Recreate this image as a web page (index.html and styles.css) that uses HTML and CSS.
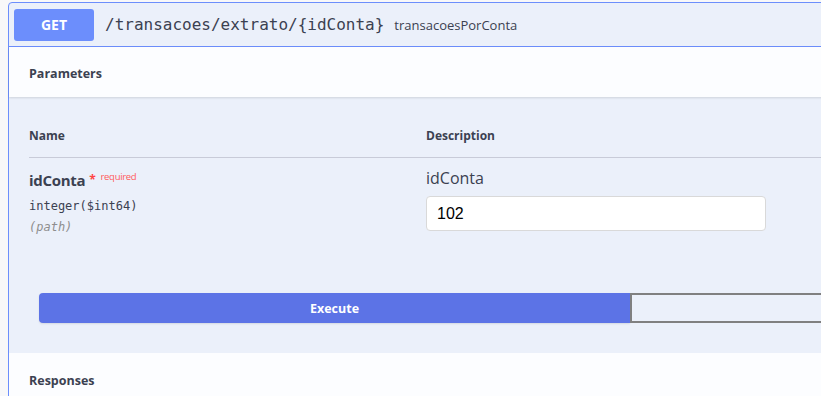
FILE: index.html
```html
<!DOCTYPE html>
<html lang="en">
<head>
  <meta charset="UTF-8">
  <title>transacoesPorConta</title>
  <link rel="stylesheet" href="styles.css">
</head>
<body>

<div class="opblock">
  <div class="opblock-summary">
    <span class="method">GET</span>
    <span class="path">/transacoes/extrato/{idConta}</span>
    <span class="op-id">transacoesPorConta</span>
  </div>

  <div class="section-header">
    <h4>Parameters</h4>
  </div>

  <div class="params">
    <div class="param-head">
      <div class="col-name">Name</div>
      <div class="col-desc">Description</div>
    </div>
    <div class="param-row">
      <div class="col-name">
        <div class="param-name">idConta<span class="star">*</span><span class="required">required</span></div>
        <div class="param-type">integer<span class="fmt">($int64)</span></div>
        <div class="param-in">(path)</div>
      </div>
      <div class="col-desc">
        <div class="desc-text">idConta</div>
        <input class="param-input" type="text" value="102">
      </div>
    </div>
  </div>

  <div class="execute-wrap">
    <button class="btn-execute">Execute</button>
    <button class="btn-clear"></button>
  </div>

  <div class="section-header responses">
    <h4>Responses</h4>
  </div>
</div>

</body>
</html>
```

FILE: styles.css
```css
html, body {
  margin: 0;
  overflow: hidden;
}
body {
  background: #f8f8f9;
  padding: 2px 0 0 8px;
  font-family: "Open Sans", sans-serif;
  color: #3b4151;
}
.opblock {
  width: 1000px;
  background: #ebf0fa;
  border: 1px solid #6c8efc;
  border-radius: 4px;
}
.opblock-summary {
  display: flex;
  align-items: center;
  padding: 5px;
  height: 33px;
  border-bottom: 1px solid #6c8efc;
}
.method {
  min-width: 80px;
  height: 32px;
  line-height: 32px;
  text-align: center;
  background: #6c8efc;
  color: #fff;
  font-size: 14px;
  font-weight: 700;
  border-radius: 3px;
}
.path {
  font-family: "DejaVu Sans Mono", monospace;
  font-size: 16px;
  padding: 0 10px 0 11px;
  color: #3b4151;
}
.op-id {
  font-size: 13px;
}
.section-header {
  background: #fcfdff;
  height: 50px;
  display: flex;
  align-items: center;
  padding: 0 20px;
  box-shadow: 0 1px 2px rgba(0,0,0,0.12);
}
.section-header h4 {
  margin: 0;
  font-size: 12.5px;
  font-weight: 700;
  padding-top: 2px;
}
.params {
  padding: 30px 20px 0 20px;
}
.param-head {
  display: flex;
  font-size: 12px;
  font-weight: 700;
  height: 20px;
  padding-bottom: 10px;
  border-bottom: 1px solid #c8cbd8;
}
.col-name {
  width: 397px;
}
.param-row {
  display: flex;
  padding-top: 12px;
  height: 123px;
}
.param-name {
  font-size: 15px;
  font-weight: 700;
  letter-spacing: -0.3px;
}
.star {
  color: #f44;
  font-size: 12px;
  margin-left: 4px;
  position: relative;
  top: -2px;
}
.required {
  color: #ff5c5c;
  font-size: 9.5px;
  font-weight: 400;
  margin-left: 5px;
  position: relative;
  top: -6px;
}
.param-type {
  font-family: "DejaVu Sans Mono", monospace;
  font-size: 12px;
  margin-top: 9px;
}
.param-in {
  font-family: "DejaVu Sans Mono", monospace;
  font-size: 12px;
  font-style: italic;
  color: #8e8e8e;
  margin-top: 7px;
}
.desc-text {
  font-size: 16px;
  line-height: 22px;
  margin-top: -3px;
}
.param-input {
  display: block;
  box-sizing: border-box;
  width: 340px;
  height: 35px;
  margin-top: 7px;
  padding: 0 10px;
  border: 1px solid #d9d9d9;
  border-radius: 4px;
  background: #fff;
  font-family: "Liberation Sans", Arial, sans-serif;
  font-size: 16px;
  color: #000;
}
.execute-wrap {
  display: flex;
  padding: 0 30px 30px 30px;
}
.btn-execute {
  width: 591px;
  height: 30px;
  border: none;
  border-radius: 4px 0 0 4px;
  background: #5c73e6;
  color: #fff;
  font-family: "Open Sans", sans-serif;
  font-size: 12.5px;
  font-weight: 700;
  box-shadow: 0 1px 2px rgba(0,0,0,0.1);
}
.btn-clear {
  flex: 1;
  height: 30px;
  border: 2px solid #808080;
  border-radius: 0 4px 4px 0;
  background: transparent;
}
.responses {
  box-shadow: none;
  align-items: flex-start;
  height: 60px;
  padding-top: 17px;
}
```
